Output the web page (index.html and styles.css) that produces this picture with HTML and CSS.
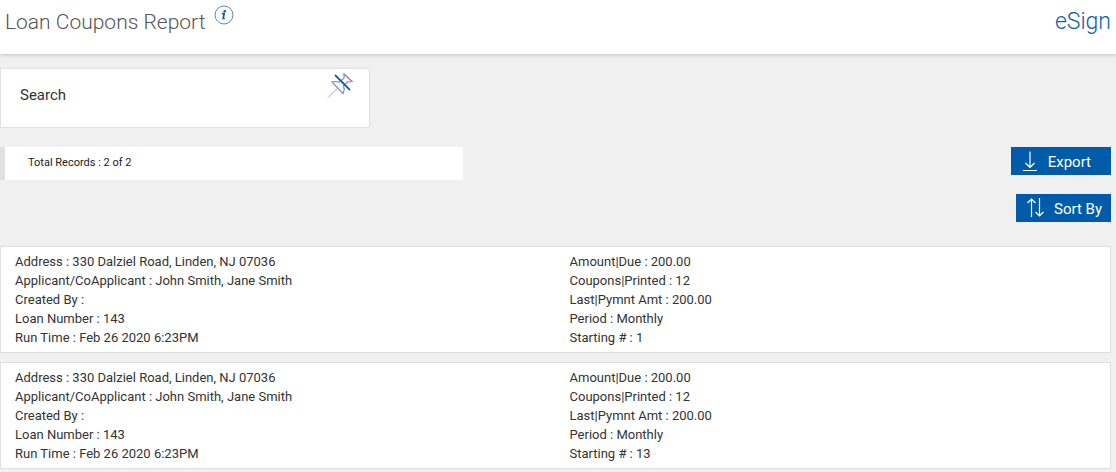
FILE: index.html
```html
<!DOCTYPE html>
<html lang="en">
<head>
    <meta charset="UTF-8">
    <meta name="viewport" content="width=device-width, initial-scale=1.0">
    <title>Loan Coupons Report</title>

    <link rel="stylesheet" href="styles.css">
</head>
<body>

    <header class="page-header">
        <div class="title-group">
            <h1>Loan Coupons Report</h1>
            <button type="button" class="icon-button" aria-label="Information">
                <svg width="20" height="20" viewBox="0 0 20 20">
                    <circle cx="10" cy="10" r="9" fill="none" stroke="#6580b8"/>
                    <circle cx="10.8" cy="6.2" r="1.3" fill="#0f5cab"/>
                    <path d="M8 8.6h2.2l-1.1 4.9h1.7" fill="none" stroke="#0f5cab" stroke-width="1.7"/>
                </svg>
            </button>
        </div>
        <a href="#" class="esign-link">eSign</a>
    </header>

    <main class="content">
        <!-- Search panel -->
        <section class="search-panel">
            <h2>Search</h2>
            <button type="button" class="icon-button" aria-label="Unpin search">
                <svg width="26" height="26" viewBox="0 0 26 26" fill="none">
                    <path d="M17 1l8 7.5-3 .5-1.500-.3-4 4.300.8 3.500-1.300 4L5 9l3.500-.5 3.500.7 5-4z" stroke="#7c8fc0" stroke-width="1.2"/>
                    <path d="M17 1l8 7.5" stroke="#b08ca8" stroke-width="1.2"/>
                    <path d="M10.3 15.2L1 24.5" stroke="#b5a6bd"/>
                    <path d="M8 2l15 15" stroke="#0f62b0" stroke-width="1.8"/>
                </svg>
            </button>
        </section>

        <!-- Record count and export -->
        <div class="toolbar">
            <div class="record-count">Total Records : 2 of 2</div>
            <button type="button" class="action-button">
                <svg width="14" height="20" viewBox="0 0 14 20" fill="none" stroke="#fff" stroke-width="1.2">
                    <path d="M7-.5v16M2.5 11L7 15.5l4.500-4.500M0 18.5h14"/>
                </svg>
                Export
            </button>
        </div>

        <div class="sort-bar">
            <button type="button" class="action-button sort-button">
                <svg width="17" height="20" viewBox="0 0 17 20" fill="none" stroke="#fff" stroke-width="1.2">
                    <path d="M4.5 18V0M.5 4l4-4 4 4M12.5-1v18M8.5 13l4 4 4-4"/>
                </svg>
                Sort By
            </button>
        </div>

        <!-- Report records -->
        <section class="record">
            <ul>
                <li>Address : 330 Dalziel Road, Linden, NJ 07036</li>
                <li>Applicant/CoApplicant : John Smith, Jane Smith</li>
                <li>Created By :</li>
                <li>Loan Number : 143</li>
                <li>Run Time : Feb 26 2020 6:23PM</li>
            </ul>
            <ul>
                <li>Amount|Due : 200.00</li>
                <li>Coupons|Printed : 12</li>
                <li>Last|Pymnt Amt : 200.00</li>
                <li>Period : Monthly</li>
                <li>Starting # : 1</li>
            </ul>
        </section>

        <section class="record">
            <ul>
                <li>Address : 330 Dalziel Road, Linden, NJ 07036</li>
                <li>Applicant/CoApplicant : John Smith, Jane Smith</li>
                <li>Created By :</li>
                <li>Loan Number : 143</li>
                <li>Run Time : Feb 26 2020 6:23PM</li>
            </ul>
            <ul>
                <li>Amount|Due : 200.00</li>
                <li>Coupons|Printed : 12</li>
                <li>Last|Pymnt Amt : 200.00</li>
                <li>Period : Monthly</li>
                <li>Starting # : 13</li>
            </ul>
        </section>
    </main>

</body>
</html>
```
FILE: styles.css
```css
/* General body styles */
* {
    box-sizing: border-box;
}

body {
    margin: 0;
    background: #f0f0f0;
    color: #333;
    font-family: Roboto, "Liberation Sans", sans-serif;
    font-size: 13px;
    line-height: 19px;
}

h1,
h2,
ul {
    margin: 0;
    padding: 0;
}

/* Header */
.page-header {
    display: flex;
    justify-content: space-between;
    padding: 5px 5px 15px;
    background: #fff;
    box-shadow: 0 1px 4px rgba(0, 0, 0, 0.2);
}

.title-group {
    display: flex;
    align-items: flex-start;
    gap: 9px;
}

h1,
.esign-link {
    font-weight: 300;
    line-height: 34px;
}

h1 {
    color: #555;
    font-size: 21px;
}

.esign-link {
    color: #0f5cab;
    font-size: 23px;
    text-decoration: none;
}

.icon-button {
    padding: 0;
    border: none;
    background: none;
    cursor: pointer;
}

.icon-button svg {
    display: block;
}

/* Search panel */
.content {
    padding: 14px 5px 4px 0;
}

.search-panel {
    display: flex;
    justify-content: space-between;
    align-items: flex-start;
    width: 370px;
    max-width: 100%;
    padding: 4px 16px 22px 19px;
    border: 1px solid #e0e0e0;
    background: #fff;
}

.search-panel h2 {
    padding-top: 13px;
    font-size: 15px;
    font-weight: 400;
}

/* Toolbar */
.toolbar {
    display: flex;
    justify-content: space-between;
    align-items: flex-start;
    margin-top: 19px;
}

.record-count {
    flex: 0 1 463px;
    padding: 6px 23px 8px;
    border-left: 5px solid #e0e0e0;
    background: #fff;
    color: #222;
    font-size: 11px;
}

.action-button {
    display: flex;
    align-items: center;
    gap: 11px;
    height: 28px;
    padding: 1px 20px 0 12px;
    border: none;
    background: #005ca9;
    color: #fff;
    font-family: inherit;
    font-size: 15px;
    cursor: pointer;
}

.action-button svg {
    overflow: visible;
}

.sort-bar {
    display: flex;
    justify-content: flex-end;
    margin: 14px 0 24px;
}

.sort-button {
    gap: 10px;
    padding: 1px 9px 0 11px;
}

/* Records */
.record {
    display: grid;
    grid-template-columns: 1fr 1fr;
    margin-bottom: 9px;
    padding: 5px 0;
    border: 1px solid #e0e0e0;
    background: #fff;
}

.record:last-child {
    margin-bottom: 0;
}

.record ul {
    padding: 0 14px;
    list-style: none;
}
```
